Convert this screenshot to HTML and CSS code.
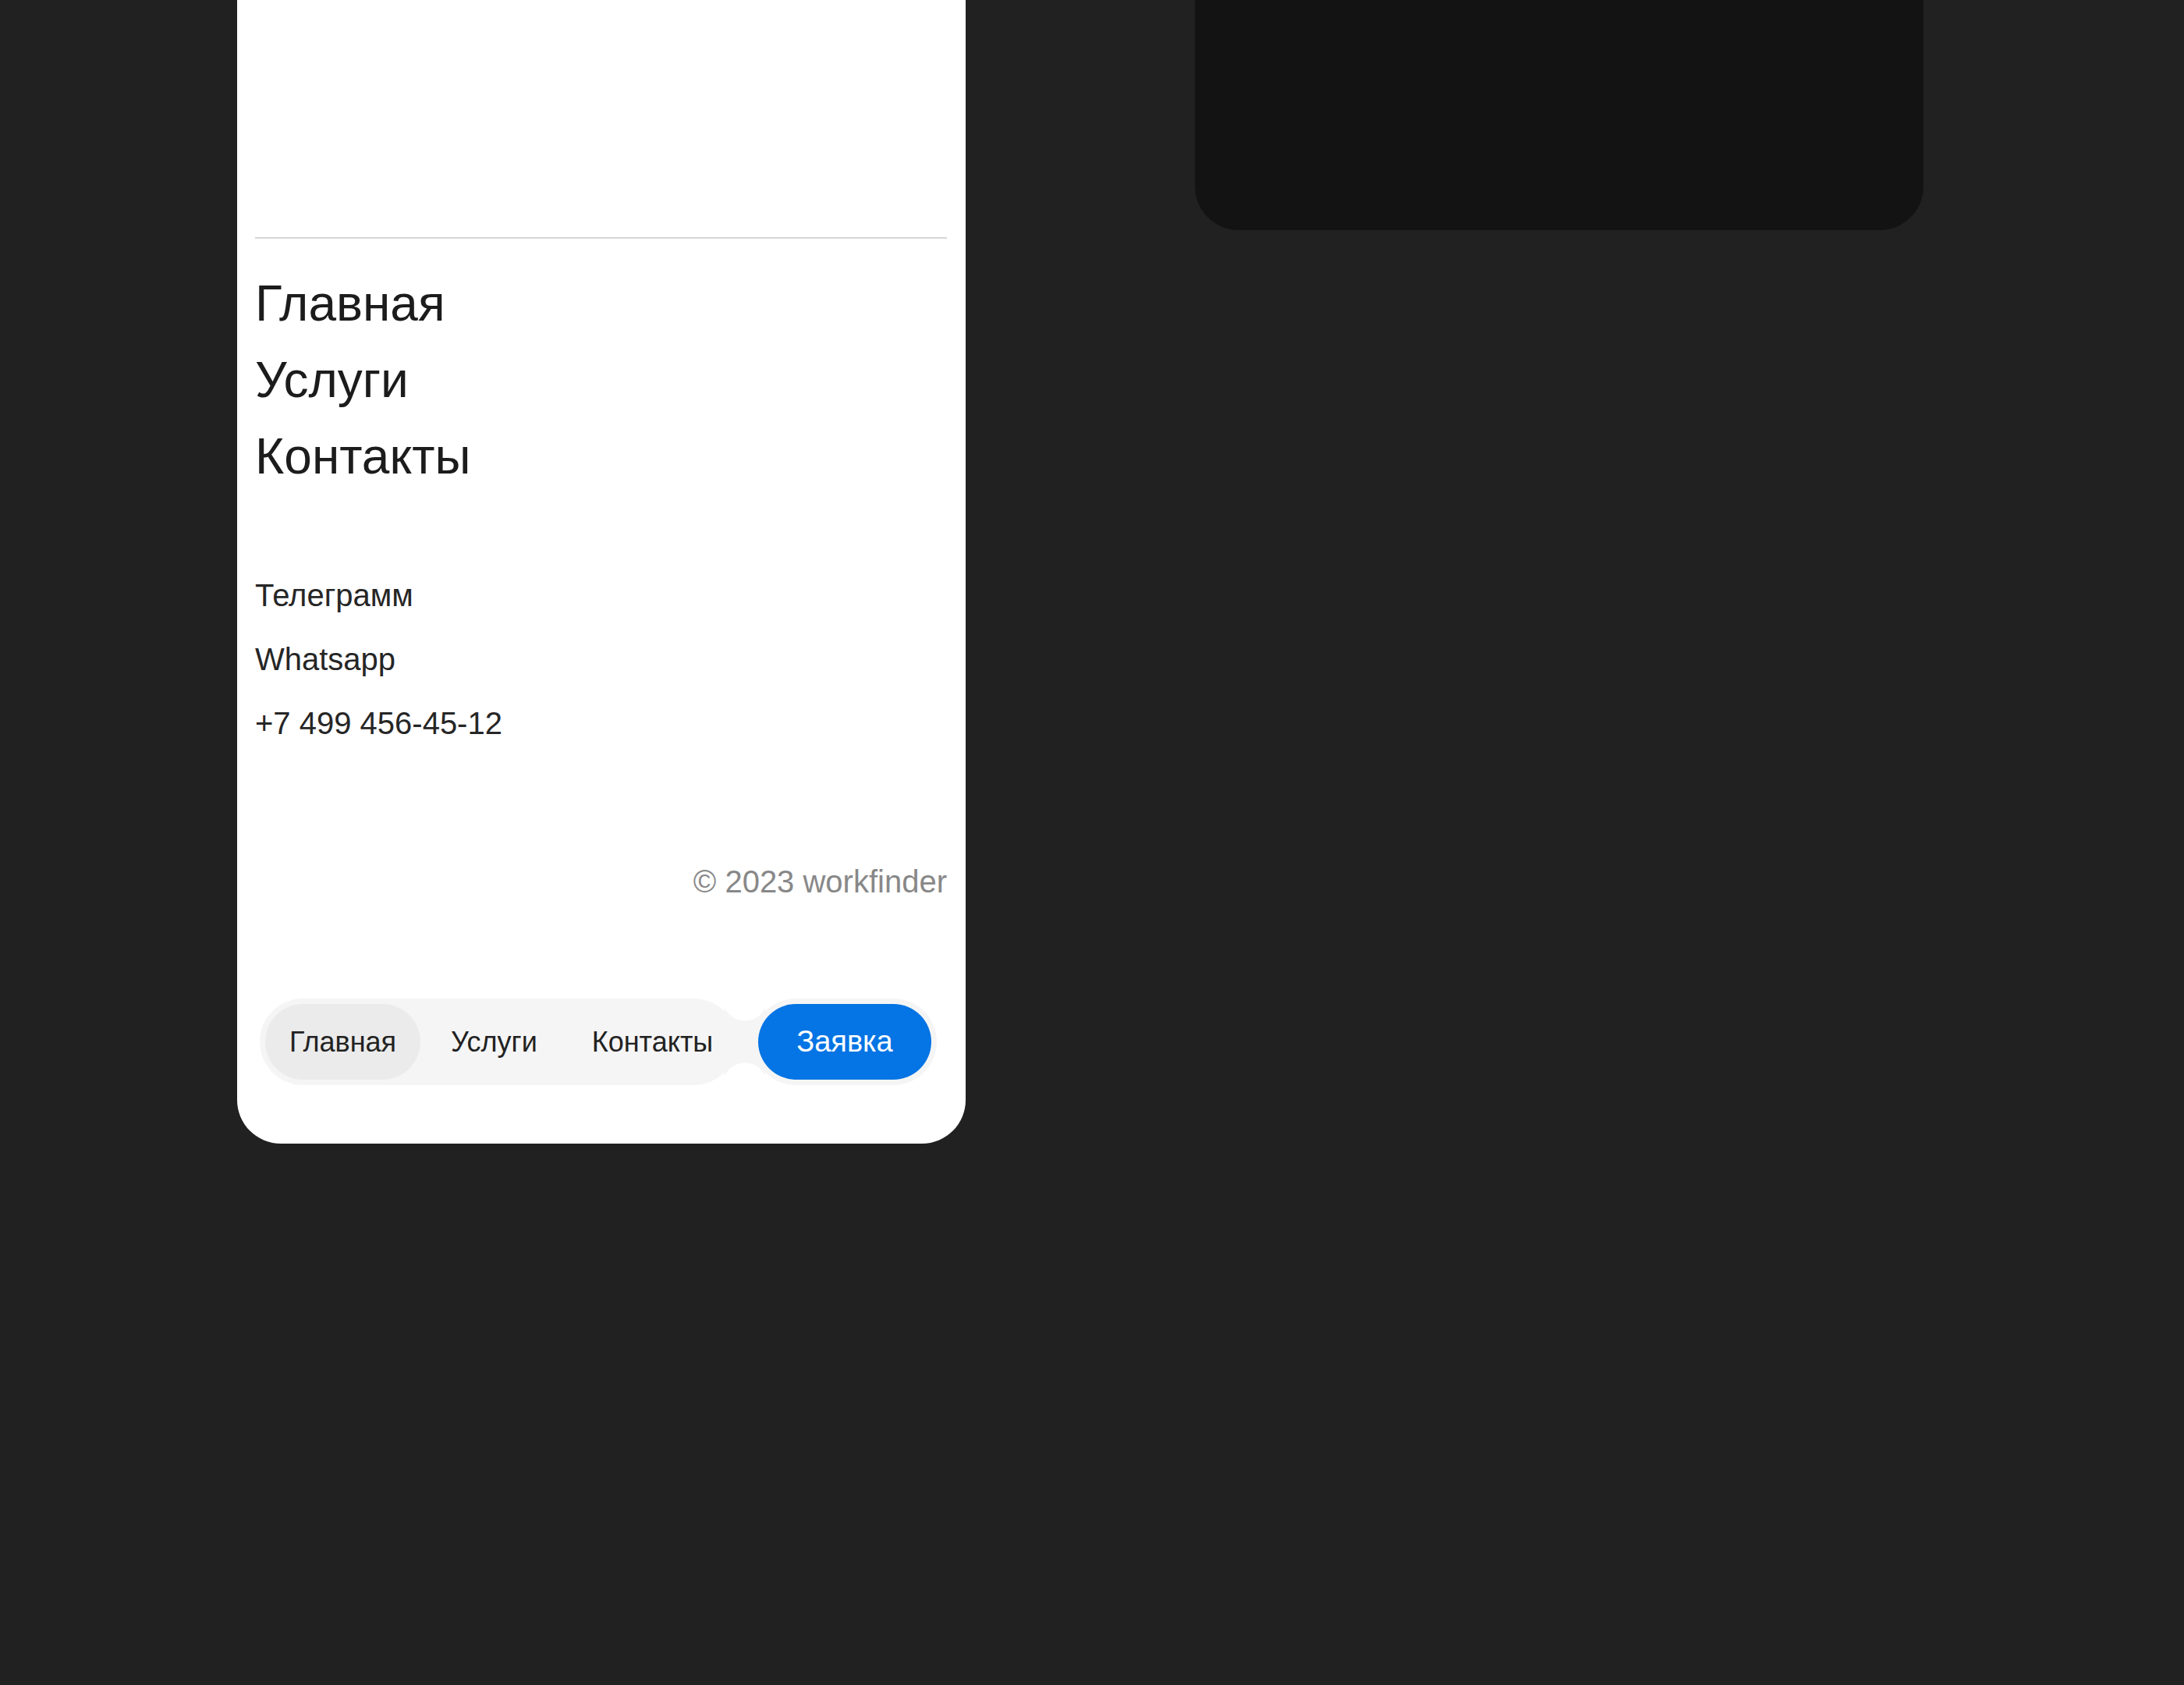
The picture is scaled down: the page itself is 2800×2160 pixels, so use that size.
FILE: index.html
```html
<!DOCTYPE html>
<html lang="ru">
  <head>
    <meta charset="UTF-8" />
    <meta name="viewport" content="width=device-width, initial-scale=1.0" />
    <title>workfinder — меню</title>
    <link rel="stylesheet" href="styles.css">
  </head>
  <body>
    <div class="page">
      <div class="phone">
        <div class="phone-top"></div>
        <div class="menu">
          <nav class="menu-links">
            <a href="#">Главная</a>
            <a href="#">Услуги</a>
            <a href="#">Контакты</a>
          </nav>
          <ul class="contacts">
            <li><a href="#">Телеграмм</a></li>
            <li><a href="#">Whatsapp</a></li>
            <li><a href="#">+7 499 456-45-12</a></li>
          </ul>
          <p class="copyright">© 2023 workfinder</p>
          <div class="bottom-bar">
            <div class="tabbar">
              <a href="#" class="tab active">Главная</a>
              <a href="#" class="tab">Услуги</a>
              <a href="#" class="tab">Контакты</a>
            </div>
            <span class="neck"></span>
            <div class="cta-wrap">
              <a href="#" class="cta">Заявка</a>
            </div>
          </div>
        </div>
      </div>
      <div class="phone phone-dark"></div>
    </div>
  </body>
</html>
```

FILE: styles.css
```css
body {
  margin: 0;
  padding: 0;
  background-color: #212121;
  font-family: "Liberation Sans", Arial, sans-serif;
  color: #1c1c1c;
}
a {
  color: inherit;
  text-decoration: none;
}
.page {
  display: flex;
  align-items: flex-start;
  gap: 294px;
  padding-left: 304px;
}
.phone {
  width: 934px;
  margin-top: -56px;
  background-color: white;
  border-radius: 56px;
}
.phone-dark {
  height: 351px;
  background-color: #131313;
}
.phone-top {
  height: 360px;
}
.menu {
  margin: 0 24px 0 23px;
  padding: 34px 0 75px;
  border-top: 2px solid #d6d6d6;
}
.menu-links {
  display: flex;
  flex-direction: column;
  align-items: flex-start;
  font-size: 64px;
  line-height: 98px;
}
.contacts {
  list-style: none;
  margin: 88px 0 0;
  padding: 0;
  font-size: 40px;
  line-height: 82px;
  color: #262626;
}
.copyright {
  margin: 132px 0 0;
  font-size: 40px;
  line-height: 60px;
  text-align: right;
  color: #888;
}
.bottom-bar {
  display: flex;
  align-items: center;
  margin: 120px 6px 0 6px;
}
.tabbar {
  position: relative;
  z-index: 1;
  display: flex;
  gap: 8px;
  padding: 7px 0 7px 7px;
  background-color: #f5f5f5;
  border-radius: 999px;
}
.tab {
  height: 97px;
  padding: 0 31px;
  display: flex;
  align-items: center;
  font-size: 36px;
  color: #222;
  border-radius: 999px;
}
.tab.active {
  background-color: #ebebeb;
}
/* soft join between the tabs and the button */
.neck {
  width: 52px;
  height: 111px;
  margin: 0 -16px;
  background:
    radial-gradient(circle at 50% 0, white 28px, transparent 29px),
    radial-gradient(circle at 50% 100%, white 28px, transparent 29px),
    #f5f5f5;
}
.cta-wrap {
  position: relative;
  z-index: 1;
  padding: 7px;
  background-color: #f5f5f5;
  border-radius: 999px;
}
.cta {
  height: 97px;
  padding: 0 49px;
  display: flex;
  align-items: center;
  font-size: 38px;
  color: white;
  background-color: #0574e4;
  border-radius: 999px;
}
```
